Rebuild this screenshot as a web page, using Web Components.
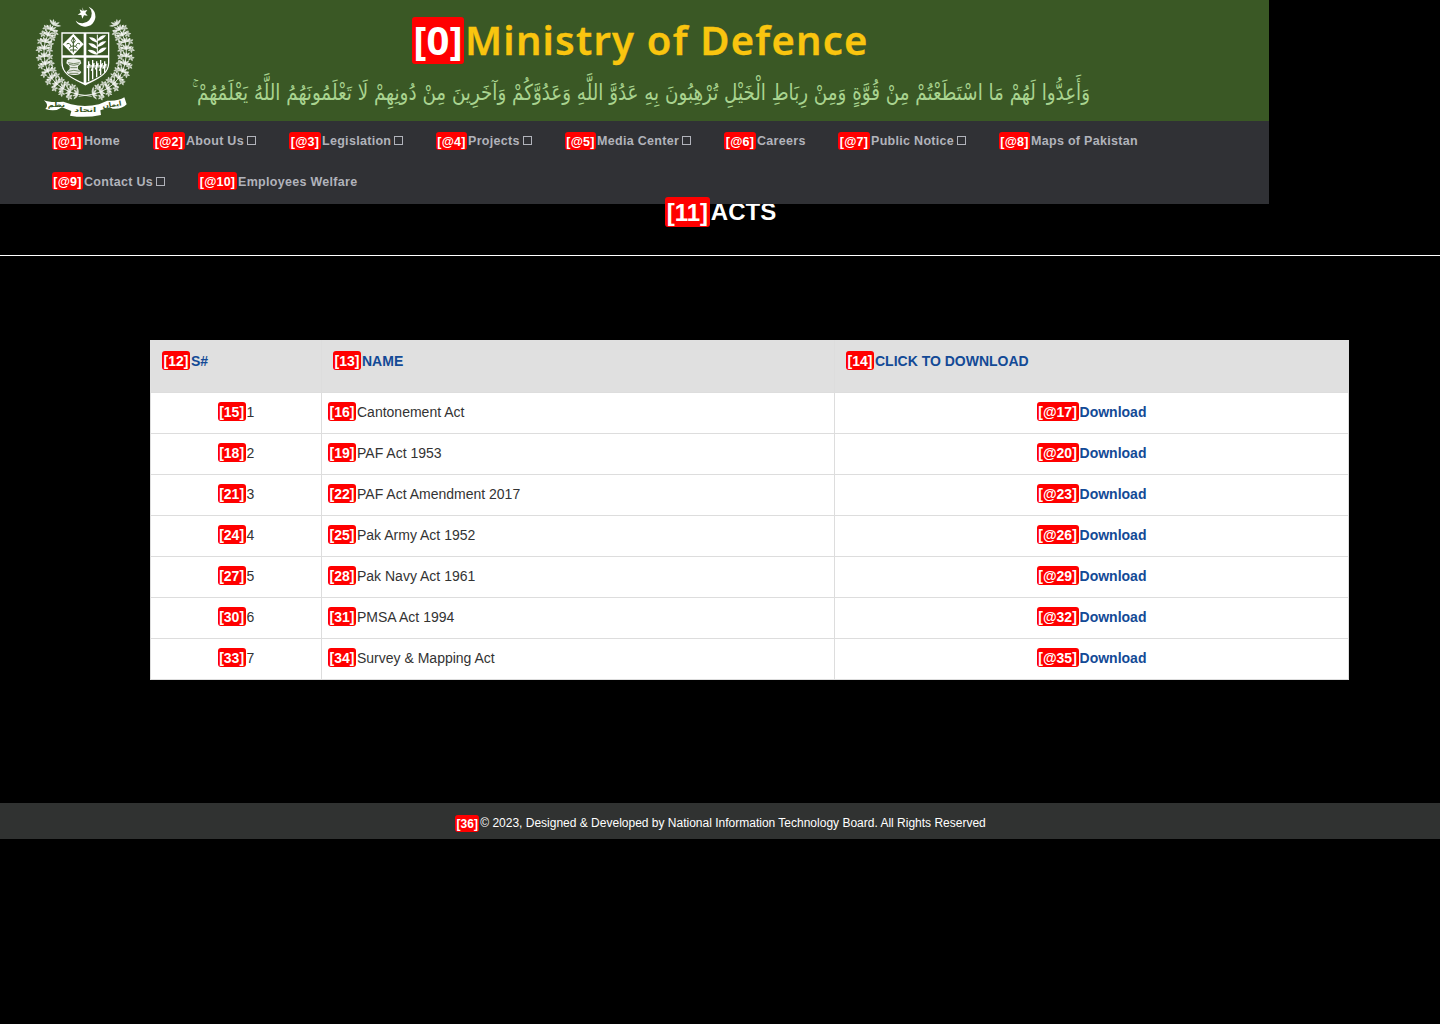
<!DOCTYPE html>
<html lang="en">
<head>
<meta charset="utf-8">
<title>Ministry of Defence - Acts</title>
<style>
body{margin:0;background:#000;font-family:"Liberation Sans",Arial,sans-serif;min-height:1024px}
</style>
</head>
<body>
<mod-page></mod-page>
<script>
class Base extends HTMLElement{
  constructor(){super();this.attachShadow({mode:'open'});}
  connectedCallback(){this.shadowRoot.innerHTML=this.view();}
  a(n){return this.getAttribute(n)||'';}
}
customElements.define('mark-tag',class extends Base{
  view(){return `<style>:host{display:inline-flex;flex:none;box-sizing:border-box;justify-content:center;align-items:center;background:#f00;color:#fff;font-weight:700;border-radius:3px;white-space:nowrap}</style><slot></slot>`;}
});
customElements.define('state-emblem',class extends Base{
  view(){
    // Left branch of the wreath, from the tip down to the crossing stems: x, y of each cluster.
    const stem=[[70,76],[61,91],[52,108],[45,128],[42,149],[43,172],[47,195],[55,217],[67,237],[83,254],[102,267],[123,277],[145,283]];
    const leaf=(x,y,r,l,w,o)=>`<path transform="translate(${x.toFixed(1)} ${y.toFixed(1)}) rotate(${r.toFixed(0)})" opacity="${o}" d="M0 0Q${l/2} ${-w} ${l} 0Q${l/2} ${w} 0 0"/>`;
    let half='';
    stem.forEach(([x,y],i)=>{
      const n=stem[Math.min(i+1,stem.length-1)],p=stem[Math.max(i-1,0)];
      const back=Math.atan2(p[1]-n[1],p[0]-n[0])*180/Math.PI;
      for(const [d,l] of [[-62,21],[-30,19],[0,15],[32,21],[64,24]]) half+=leaf(x,y,back+d,l,6,.8);
      if(i>0&&i<12){
        const nx=Math.cos((back-90)*Math.PI/180),ny=Math.sin((back-90)*Math.PI/180);
        for(const s of [-17,15]) for(let k=0;k<5;k++) half+=leaf(x+nx*s,y+ny*s,k*72+i*23,11,6,.75);
      }
    });
    half+=`<path fill="none" stroke="#fff" stroke-width="3" opacity=".8" d="M${stem.map(q=>q.join(' ')).join('L')}L185 289"/>`;
    return `<style>:host{display:block;width:110px;height:122px}svg{display:block}text{font-family:"DejaVu Sans",sans-serif;font-weight:700}</style>
<svg width="110" height="122" viewBox="0 0 330 366" fill="#fff">
<path d="M176 20A31 31 0 1 1 137 62A27 27 0 1 0 176 20Z"/>
<path d="M157 22l4 10 11-2-6 9 7 8-11-1-5 10-3-11-11-1 9-6-3-10 9 5z"/>
<g>${half}</g><g transform="translate(331 0) scale(-1 1)">${half}</g>
<path stroke="#3a5825" stroke-width="4" d="M92 95H240V188C240 226 203 239 166 259C129 239 92 226 92 188Z"/>
<path fill="#3a5825" d="M98 101H161V166H98ZM169 101H234V166H169ZM98 173H161V248C126 233 98 220 98 188ZM169 173H234V188C234 220 206 233 169 248Z"/>
<path d="M130 101L161 133 130 166 98 133Z"/>
<g fill="none" stroke="#3a5825" stroke-width="3"><path d="M130 112V157M117 145Q130 130 143 145M120 150H140M110 132Q119 126 123 139M150 132Q141 126 137 139M130 112L124 122 130 130 136 122Z"/></g>
<g stroke="#fff" stroke-width="3" fill="none"><path d="M202 104V163"/></g>
<path d="M202 120Q210 104 228 106Q220 120 202 123ZM202 138Q211 122 229 124Q220 138 202 141ZM202 158Q212 140 230 143Q220 158 202 161ZM202 125Q194 110 177 112Q185 125 202 128ZM202 143Q193 128 175 130Q184 144 202 146ZM202 162Q192 147 173 150Q184 163 202 164Z"/>
<path opacity=".9" d="M111 180Q130 171 151 180L154 190 144 199V207L154 216Q150 226 134 225 116 226 109 217L119 207V198L109 190Z"/>
<path stroke="#3a5825" stroke-width="2" fill="none" d="M114 188Q131 194 149 188M117 193Q131 199 146 193M121 203H142M115 214Q131 208 149 214M118 220H145"/>
<g stroke="#fff" stroke-width="4" fill="none"><path d="M176 244V184M188 238V180M200 232V184M212 226V180M224 218V184M172 204L180 192M184 212L193 190M196 208L205 190M208 212L218 190M218 206L229 192"/></g>
<path d="M170 195h60v8h-60z" opacity=".65"/>
<path d="M42 301Q60 309 100 305L123 313Q165 323 207 313L232 302Q265 304 283 292L290 313Q275 329 248 326L240 322 211 331 213 345Q165 355 120 347L124 333 96 322Q76 337 46 327Q58 316 42 301Z"/>
<g fill="#3a5825" font-size="20"><text x="53" y="322" textLength="52" lengthAdjust="spacingAndGlyphs">نظم</text><text x="133" y="337" textLength="66" lengthAdjust="spacingAndGlyphs">اتحاد</text><text transform="translate(218 325) rotate(-9)" textLength="58" lengthAdjust="spacingAndGlyphs">ایمان</text></g>
</svg>`;}
});
customElements.define('site-banner',class extends Base{
  view(){return `<style>
:host{display:flex;height:121px;background:#3a5825;box-sizing:border-box;padding-left:30px}
.c{display:flex;flex-direction:column;padding:17px 0 0 50px}
h1{margin:0 0 0 222px;display:flex;align-items:flex-start;font:600 40px/46px "Noto Sans","Open Sans",sans-serif;color:#f9c50f;letter-spacing:1.2px;-webkit-text-stroke:.3px #f9c50f;white-space:nowrap}
mark-tag{width:52px;height:47px;letter-spacing:0;margin-right:1px;font:700 40px/47px "Noto Sans","Open Sans",sans-serif;-webkit-text-stroke:0;padding-bottom:2px}
svg{display:block;overflow:visible}
text{font-family:"DejaVu Sans",sans-serif;fill:#a9d490}
</style><state-emblem></state-emblem><div class="c"><h1><mark-tag>[0]</mark-tag><span>Ministry of Defence</span></h1>
<svg width="902" height="54" viewBox="0 0 902 54"><text x="900" y="36" direction="rtl" font-size="22" textLength="898" lengthAdjust="spacingAndGlyphs">وَأَعِدُّوا لَهُمْ مَا اسْتَطَعْتُمْ مِنْ قُوَّةٍ وَمِنْ رِبَاطِ الْخَيْلِ تُرْهِبُونَ بِهِ عَدُوَّ اللَّهِ وَعَدُوَّكُمْ وَآخَرِينَ مِنْ دُونِهِمْ لَا تَعْلَمُونَهُمُ اللَّهُ يَعْلَمُهُمْ ۚ</text></svg></div>`;}
});
customElements.define('nav-item',class extends Base{
  view(){return `<style>
:host{display:flex;align-items:flex-start;height:18px;font-weight:700;font-size:12.5px;line-height:18px;letter-spacing:.3px;color:#b1b3bb;white-space:nowrap;flex:none;width:${this.a('w')}px}
mark-tag{height:18px;width:${this.a('t')}px;margin-right:1px;font-size:12.5px;letter-spacing:.2px;line-height:20px;padding-top:1px}
.t{padding-top:var(--drop,0)}
i{box-sizing:border-box;width:9px;height:9px;border:1px solid #b1b3bb;margin:calc(4px + var(--drop,0px)) 0 0 3px}
</style><mark-tag>[@${this.a('n')}]</mark-tag><span class="t"><slot></slot></span>${this.hasAttribute('sub')?'<i></i>':''}`;}
});
customElements.define('site-nav',class extends Base{
  view(){return `<style>
:host{display:flex;flex-direction:column;gap:22px;height:83px;box-sizing:border-box;padding:11px 0 0 52px;background:#303135}
div{display:flex}
.two{--drop:1px}
</style><div><nav-item n="1" t="31" w="101">Home</nav-item><nav-item n="2" t="32" w="136" sub>About Us</nav-item><nav-item n="3" t="32" w="147" sub>Legislation</nav-item><nav-item n="4" t="31" w="129" sub>Projects</nav-item><nav-item n="5" t="31" w="159" sub>Media Center</nav-item><nav-item n="6" t="32" w="114">Careers</nav-item><nav-item n="7" t="32" w="161" sub>Public Notice</nav-item><nav-item n="8" t="31" w="140">Maps of Pakistan</nav-item></div>
<div class="two"><nav-item n="9" t="31" w="146" sub>Contact Us</nav-item><nav-item n="10" t="39" w="160">Employees Welfare</nav-item></div>`;}
});
customElements.define('page-title',class extends Base{
  view(){return `<style>
:host{display:flex;justify-content:center;height:59px;box-sizing:border-box;margin-top:-7px;padding-left:1px;border-bottom:1px solid #fff;color:#fff}
h2{margin:0;display:flex;font-size:24px;line-height:30px}
mark-tag{position:relative;z-index:3;width:45px;height:30px;margin-right:1px;line-height:32px;padding-top:1px}
</style><h2><mark-tag>[11]</mark-tag><span><slot></slot></span></h2>`;}
});
customElements.define('act-row',class extends Base{
  view(){const n=+this.a('n'),b=12+n*3;return `<style>
:host{display:grid;grid-template-columns:172px 513px 514px;height:41px;background:#fff;color:#333;font-size:14px}
div{display:flex;box-sizing:border-box;border-right:1px solid #ddd;border-bottom:1px solid #ddd;padding-top:9px;line-height:20px;white-space:nowrap}
.s{border-left:1px solid #ddd;justify-content:center}
.n{padding-left:6px}.d{justify-content:center;color:#134a96;font-weight:700}
mark-tag{width:28px;height:19px;margin-right:1px;padding-top:2px;line-height:19px}
.d mark-tag{width:42px}
</style><div class="s"><mark-tag>[${b}]</mark-tag>${n}</div><div class="n"><mark-tag>[${b+1}]</mark-tag><slot></slot></div><div class="d"><mark-tag>[@${b+2}]</mark-tag>Download</div>`;}
});
customElements.define('acts-table',class extends Base{
  view(){return `<style>
:host{display:block;width:1199px;margin:84px 0 0 150px}
.h{display:grid;grid-template-columns:172px 513px 514px;height:53px;background:#e0e0e0;color:#134a96;font-weight:700;font-size:14px;line-height:20px}
.h div{display:flex;box-sizing:border-box;border-right:1px solid #ddd;border-bottom:1px solid #ddd;padding:11px 0 0 11px;white-space:nowrap}
.h div:first-child{padding-left:12px}
mark-tag{width:28px;height:19px;margin-right:1px;padding-top:2px;line-height:19px}
</style><div class="h"><div><mark-tag>[12]</mark-tag>S#</div><div><mark-tag>[13]</mark-tag>NAME</div><div><mark-tag>[14]</mark-tag>CLICK TO DOWNLOAD</div></div>
${['Cantonement Act','PAF Act 1953','PAF Act Amendment 2017','Pak Army Act 1952','Pak Navy Act 1961','PMSA Act 1994','Survey &amp; Mapping Act'].map((t,i)=>`<act-row n="${i+1}">${t}</act-row>`).join('')}`;}
});
customElements.define('site-footer',class extends Base{
  view(){return `<style>
:host{display:flex;justify-content:center;height:36px;box-sizing:border-box;padding:12px 0 0 1px;margin-top:123px;background:#303231;color:#fff;font-size:12px;line-height:16px;white-space:nowrap}
mark-tag{width:24px;height:17px;margin-right:1px;line-height:17px;padding-top:2px}
</style><mark-tag>[36]</mark-tag><span>© 2023, Designed &amp; Developed by National Information Technology Board. All Rights Reserved</span>`;}
});
customElements.define('mod-page',class extends Base{
  view(){return `<style>:host{display:block}header{position:relative;z-index:2;width:1269px}</style>
<header><site-banner></site-banner><site-nav></site-nav></header><page-title>ACTS</page-title><acts-table></acts-table><site-footer></site-footer>`;}
});
</script>
</body>
</html>
